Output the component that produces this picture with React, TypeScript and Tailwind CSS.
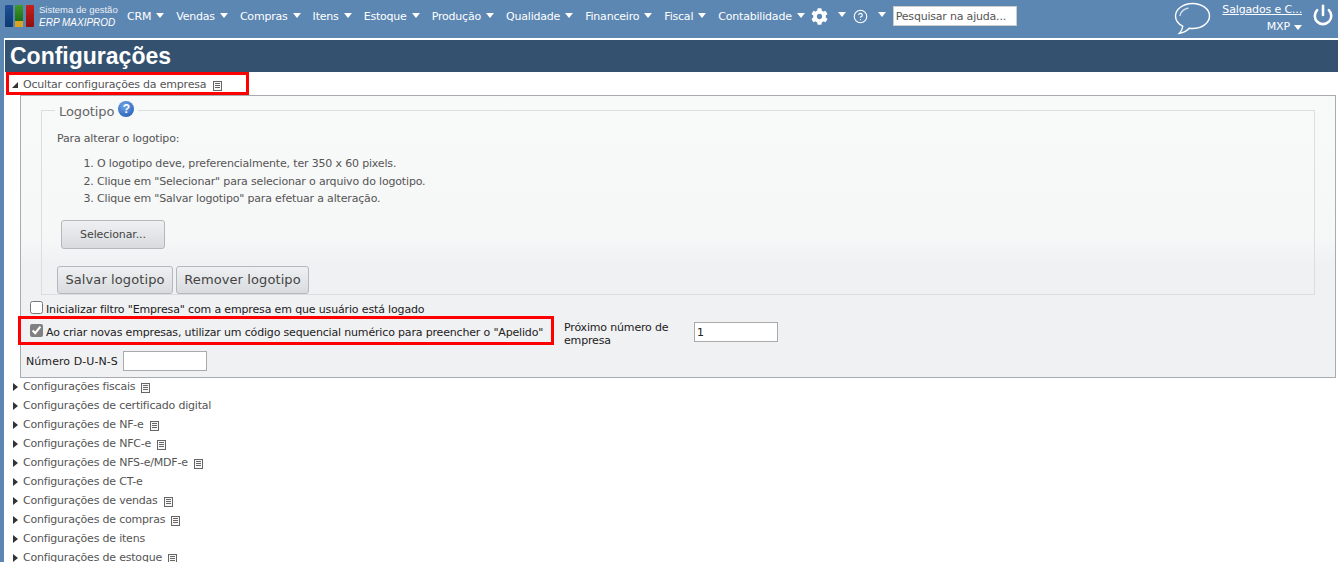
import { CircleHelp, Power } from 'lucide-react'
import { FaCog } from 'react-icons/fa'

const menus = ['CRM', 'Vendas', 'Compras', 'Itens', 'Estoque', 'Produção', 'Qualidade', 'Financeiro', 'Fiscal', 'Contabilidade']

const sections = [
  { label: 'Configurações fiscais', doc: true },
  { label: 'Configurações de certificado digital', doc: false },
  { label: 'Configurações de NF-e', doc: true },
  { label: 'Configurações de NFC-e', doc: true },
  { label: 'Configurações de NFS-e/MDF-e', doc: true },
  { label: 'Configurações de CT-e', doc: false },
  { label: 'Configurações de vendas', doc: true },
  { label: 'Configurações de compras', doc: true },
  { label: 'Configurações de itens', doc: false },
  { label: 'Configurações de estoque', doc: true },
]

function Caret() {
  return <span className="inline-block h-0 w-0 border-x-[4.5px] border-t-[5px] border-x-transparent border-t-white" />
}

function DocIcon() {
  return (
    <svg width="9" height="10" viewBox="0 0 9 10" className="mt-[3px] shrink-0">
      <rect x="0.5" y="0.5" width="8" height="9" fill="#f7f7f7" stroke="#666" />
      <path d="M2 2.5h5M2 4.5h5M2 6.5h5" stroke="#666" />
    </svg>
  )
}

function Logo() {
  return (
    <div className="flex h-[22px] w-[29px] gap-[2px]">
      <div className="w-[8px] rounded-[1px] bg-gradient-to-b from-[#1f4f96] to-[#0c3a70]" />
      <div className="flex w-[9px] flex-col">
        <div className="h-[16px] bg-gradient-to-b from-[#3f9a2a] to-[#1f6e16]" />
        <div className="h-[6px] bg-[#d9a520]" />
      </div>
      <div className="ml-[1px] w-[8px] rounded-[1px] bg-gradient-to-b from-[#c8201c] to-[#8f0f10]" />
    </div>
  )
}

function ChatBubble() {
  return (
    <svg width="37" height="33" viewBox="0 0 37 33" fill="none" stroke="#fff" strokeWidth="1.4">
      <path d="M18.5 1.5C9 1.5 1.5 7.2 1.5 14c0 4.300 2.800 8 7.200 10.200-.3 2.800-1.400 5.300-3.200 7 3.900-.6 7.300-2.400 9.700-5 1 .2 2.100.3 3.300.3 9.500 0 17-5.600 17-12.500S28 1.500 18.500 1.500z" />
      <path d="M6 14c.5-4 4-7 8.500-8" strokeOpacity="0.7" />
    </svg>
  )
}

function HelpBadge() {
  return (
    <span className="flex h-[16px] w-[16px] items-center justify-center rounded-full bg-[radial-gradient(circle_at_40%_30%,#6fa3e6,#1b57b0)] font-['Liberation_Sans',sans-serif] text-[12px] font-bold leading-none text-white">
      ?
    </span>
  )
}

function Button({ label, className }: { label: string; className: string }) {
  return (
    <button className={`rounded-[3px] border border-[#b3b8bd] bg-gradient-to-b from-[#eef0f2] to-[#d9dcdf] text-[#444] ${className}`}>
      {label}
    </button>
  )
}

export default function App() {
  return (
    <div className="h-[562px] w-[1338px] overflow-hidden bg-[#5d87b3] font-['DejaVu_Sans',sans-serif] text-[11px] tracking-[-0.2px] text-[#555]">
      <header className="flex h-[38px] items-start pl-[5px] text-white">
        <div className="flex w-[122px] gap-[5px] pt-[5px]">
          <Logo />
          <div className="-mt-[2px] whitespace-nowrap font-['Liberation_Sans',sans-serif] tracking-normal">
            <div className="text-[9.5px] leading-[13px] text-[#e8eef5]">Sistema de gestão</div>
            <div className="text-[10px] italic leading-[14px]">ERP MAXIPROD</div>
          </div>
        </div>
        <nav className="flex items-center gap-[12px] pt-[10px]">
          {menus.map((m) => (
            <div key={m} className="flex items-center gap-[5px] leading-[14px]">
              {m}
              <span className="-mt-[4px] flex">
                <Caret />
              </span>
            </div>
          ))}
        </nav>
        <div className="ml-[6px] flex items-center pt-[8px]">
          <FaCog size={17} />
          <span className="ml-[10px] -mt-[4px] flex">
            <Caret />
          </span>
          <CircleHelp size={15} strokeWidth={1.8} className="ml-[7px]" />
          <span className="ml-[10px] -mt-[4px] flex">
            <Caret />
          </span>
        </div>
        <input
          className="ml-[7px] mt-[6px] h-[20px] w-[124px] border border-[#ccc] bg-white px-[2px] text-[#555] placeholder:text-[#555]"
          placeholder="Pesquisar na ajuda..."
        />
        <div className="ml-auto flex items-start pr-[4px]">
          <div className="mt-[2px]">
            <ChatBubble />
          </div>
          <div className="ml-[9px] mt-[3px] flex w-[82px] flex-col items-end tracking-[-0.15px]">
            <span className="leading-[14px] underline">Salgados e C...</span>
            <span className="mt-[3px] flex items-center gap-[4px] leading-[14px]">
              MXP
              <Caret />
            </span>
          </div>
          <Power size={22} strokeWidth={2.8} className="ml-[10px] mt-[4px]" />
        </div>
      </header>

      <main className="ml-[4px] h-[524px] overflow-hidden bg-white pt-[2px]">
        <h1 className="ml-[1px] bg-[#34526f] pl-[5px] font-['Liberation_Sans',sans-serif] text-[23px] font-bold leading-[32px] tracking-normal text-white">
          Configurações
        </h1>

        <div className="ml-[2px] flex h-[23px] w-[243px] items-start border-[3px] border-[#f00] pt-[3px]">
          <span className="ml-[3px] mt-[4px] h-0 w-0 border-b-[6px] border-l-[6px] border-b-[#333] border-l-transparent" />
          <span className="ml-[5px] leading-[14px]">Ocultar configurações da empresa</span>
          <span className="ml-[7px]">
            <DocIcon />
          </span>
        </div>

        <section className="ml-[16px] mr-[2px] h-[283px] border border-[#a8abb0] bg-gradient-to-b from-[#f8f9f9] via-[#f6f7f7] to-[#f0f1f3] to-60%">
          <fieldset className="ml-[20px] mr-[20px] mt-[5px] h-[194px] border border-[#dcdddf] pl-[15px] tracking-[-0.17px]">
            <legend className="-ml-[2px] flex h-[18px] items-start px-[4px] text-[13px] tracking-[-0.1px] text-[#666]">
              <span className="mt-[3px] leading-[16px]">Logotipo</span>
              <span className="ml-[4px]">
                <HelpBadge />
              </span>
            </legend>
            <p className="mt-[13px] leading-[14px]">Para alterar o logotipo:</p>
            <ol className="mt-[9px] list-decimal pl-[40px] leading-[17.500px]">
              <li>O logotipo deve, preferencialmente, ter 350 x 60 pixels.</li>
              <li>Clique em "Selecionar" para selecionar o arquivo do logotipo.</li>
              <li>Clique em "Salvar logotipo" para efetuar a alteração.</li>
            </ol>
            <Button label="Selecionar..." className="ml-[4px] mt-[12px] block h-[29px] w-[104px] pt-[2px] tracking-[-0.1px]" />
            <div className="mt-[17px] flex gap-[3px]">
              <Button label="Salvar logotipo" className="h-[28px] w-[116px] pt-[1px] text-[13px] tracking-[0.1px]" />
              <Button label="Remover logotipo" className="h-[28px] w-[133px] pt-[1px] text-[13px] tracking-[0.1px]" />
            </div>
          </fieldset>

          <div className="mt-[5px] flex h-[16px] items-center pl-[9px] tracking-[-0.15px] text-[#222]">
            <input type="checkbox" className="m-0 -mt-[2px] h-[13px] w-[13px]" />
            <span className="ml-[3px] mt-[5px]">Inicializar filtro "Empresa" com a empresa em que usuário está logado</span>
          </div>

          <div className="flex items-start tracking-[-0.17px] text-[#222]">
            <div className="-ml-[3px] flex h-[29px] w-[536px] shrink-0 items-center border-[3px] border-[#f00] pl-[9px]">
              <input type="checkbox" checked readOnly className="m-0 -mt-[1px] h-[13px] w-[13px] accent-[#808080]" />
              <span className="ml-[3px] mt-[6px]">Ao criar novas empresas, utilizar um código sequencial numérico para preencher o "Apelido"</span>
            </div>
            <label className="ml-[10px] mt-[5px] w-[120px] leading-[13px]">Próximo número de empresa</label>
            <input defaultValue="1" className="ml-[10px] mt-[6px] h-[20px] w-[84px] border border-[#aaa] bg-white px-[2px] text-[#222]" />
          </div>

          <div className="mt-[4px] flex items-center pl-[5px] tracking-[0.07px] text-[#222]">
            <span className="mt-[2px]">Número D-U-N-S</span>
            <input className="ml-[5px] h-[20px] w-[84px] border border-[#aaa] bg-white" />
          </div>
        </section>

        <ul className="-mt-[1px] pt-[0px]">
          {sections.map((s) => (
            <li key={s.label} className="flex h-[19px] items-center">
              <span className="ml-[9px] h-0 w-0 border-y-[4px] border-l-[5px] border-y-transparent border-l-[#333]" />
              <span className="ml-[5px] leading-[14px]">{s.label}</span>
              {s.doc && (
                <span className="ml-[6px]">
                  <DocIcon />
                </span>
              )}
            </li>
          ))}
        </ul>
      </main>
    </div>
  )
}
